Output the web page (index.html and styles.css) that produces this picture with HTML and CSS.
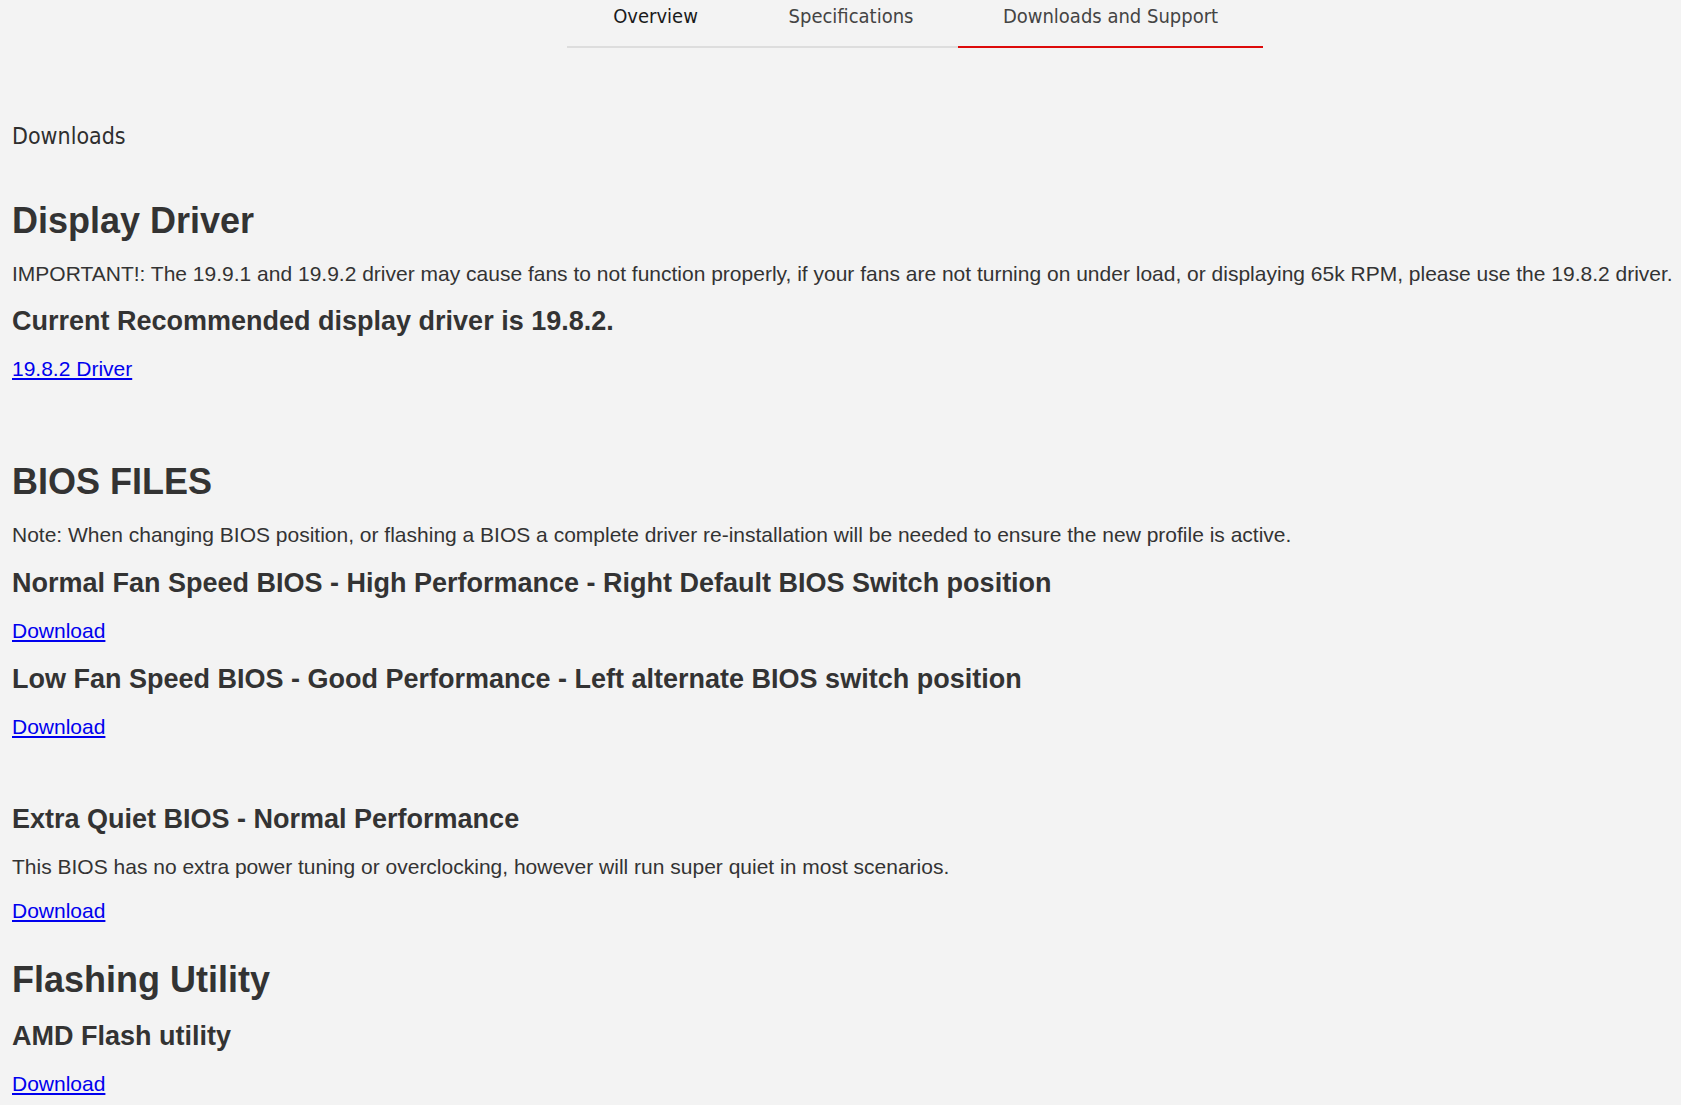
FILE: index.html
```html
<!DOCTYPE html>
<html lang="en">
<head>
<meta charset="utf-8">
<title>Downloads and Support</title>
<link rel="stylesheet" href="styles.css">
</head>
<body>
<nav class="tabs">
  <a class="tab tab-overview">Overview</a>
  <a class="tab tab-specs">Specifications</a>
  <a class="tab tab-downloads active">Downloads and Support</a>
</nav>
<main class="content">
  <div class="label">Downloads</div>

  <section class="block">
    <h2 class="h2">Display Driver</h2>
    <p class="text">IMPORTANT!: The 19.9.1 and 19.9.2 driver may cause fans to not function properly, if your fans are not turning on under load, or displaying 65k RPM, please use the 19.8.2 driver.</p>
    <h4 class="h4 h4-nudge">Current Recommended display driver is 19.8.2.</h4>
    <p class="linkrow"><a class="link" href="#">19.8.2 Driver</a></p>
  </section>

  <section class="block block-bios">
    <h2 class="h2">BIOS FILES</h2>
    <p class="text">Note: When changing BIOS position, or flashing a BIOS a complete driver re-installation will be needed to ensure the new profile is active.</p>
    <h4 class="h4">Normal Fan Speed BIOS - High Performance - Right Default BIOS Switch position</h4>
    <p class="linkrow"><a class="link" href="#">Download</a></p>
    <h4 class="h4 h4-tight">Low Fan Speed BIOS - Good Performance - Left alternate BIOS switch position</h4>
    <p class="linkrow"><a class="link" href="#">Download</a></p>
  </section>

  <section class="block block-quiet">
    <h4 class="h4">Extra Quiet BIOS - Normal Performance</h4>
    <p class="text">This BIOS has no extra power tuning or overclocking, however will run super quiet in most scenarios.</p>
    <p class="linkrow"><a class="link" href="#">Download</a></p>
  </section>

  <section class="block block-flash">
    <h2 class="h2">Flashing Utility</h2>
    <h4 class="h4 h4-nudge">AMD Flash utility</h4>
    <p class="linkrow"><a class="link" href="#">Download</a></p>
  </section>
</main>
</body>
</html>
```

FILE: styles.css
```css
html, body {
  margin: 0;
  padding: 0;
  background: #f3f3f3;
}

body {
  font-family: "Liberation Sans", Arial, sans-serif;
  color: #333333;
}

.tabs {
  display: flex;
  padding-left: 567px;
}

.tab {
  display: block;
  text-align: center;
  font-family: "DejaVu Sans Condensed", "DejaVu Sans", sans-serif;
  font-stretch: condensed;
  font-size: 20px;
  font-weight: 400;
  line-height: 32px;
  padding-bottom: 14px;
  border-bottom: 2px solid #dddddd;
  color: #444444;
  text-decoration: none;
}

.tab-overview {
  width: 177px;
  color: #1a1a1a;
}

.tab-specs {
  width: 214px;
}

.tab-downloads {
  width: 305px;
}

.tab.active {
  border-bottom-color: #dd0a0a;
}

.content {
  display: flex;
  flex-direction: column;
  padding: 0 12px 40px 12px;
}

.label {
  margin-top: 76px;
  font-family: "DejaVu Sans Condensed", "DejaVu Sans", sans-serif;
  font-stretch: condensed;
  font-size: 23px;
  line-height: 24px;
  color: #2e2e2e;
}

.block {
  display: flex;
  flex-direction: column;
  gap: 20px;
  margin-top: 52px;
}

.block-bios {
  margin-top: 78px;
}

.block-quiet {
  margin-top: 62px;
}

.block-flash {
  margin-top: 34px;
}

.h2 {
  margin: 0;
  font-size: 36px;
  line-height: 42px;
  font-weight: 700;
  color: #333333;
}

.h4 {
  margin: 0;
  font-size: 27px;
  line-height: 32px;
  font-weight: 700;
  color: #333333;
}

.h4-nudge {
  margin-top: -1px;
}

.h4-tight {
  margin-top: -2px;
}

.text {
  margin: 0;
  font-size: 21px;
  line-height: 24px;
  white-space: nowrap;
}

.linkrow {
  margin: 0;
  line-height: 24px;
}

.link {
  font-size: 21px;
  line-height: 24px;
  color: #0000ee;
  text-decoration: underline;
}
```
